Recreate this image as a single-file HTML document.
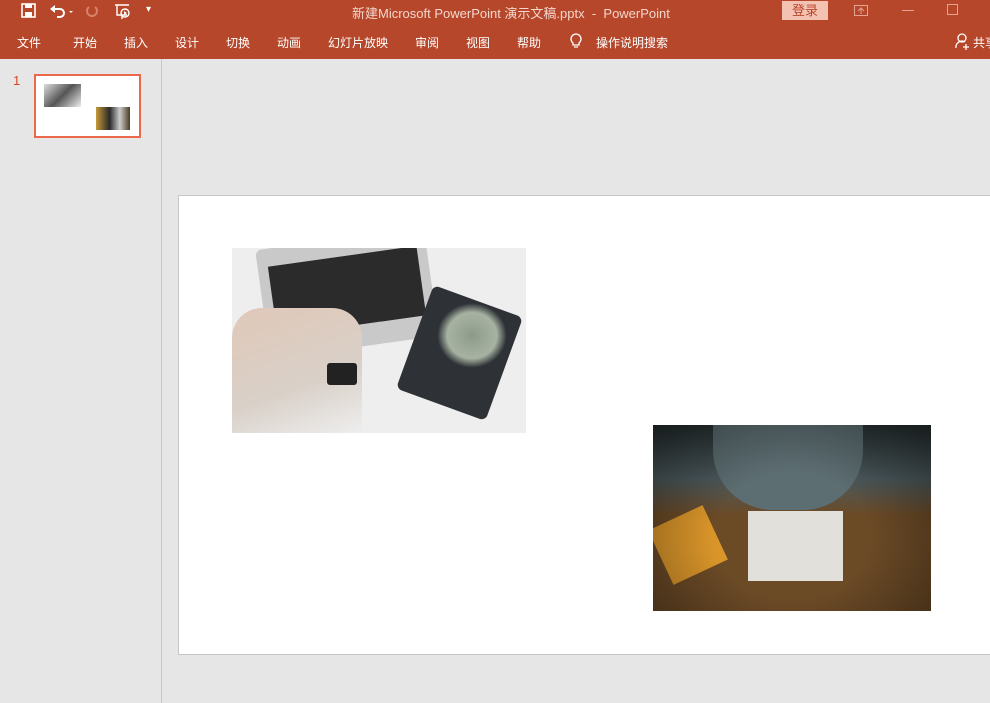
<!DOCTYPE html>
<html><head><meta charset="utf-8"><style>
*{margin:0;padding:0;box-sizing:border-box}
body{width:990px;height:703px;overflow:hidden;background:#e6e6e6;font-family:"Liberation Sans","Noto Sans CJK SC",sans-serif;position:relative}
.top{position:absolute;left:0;top:0;width:990px;height:59px;background:#b7472a;color:#fff}
.t{position:absolute;font-size:12px;white-space:nowrap}
.title{position:absolute;left:352px;top:3px;font-size:13px;color:#f3d6cd}
.login{position:absolute;left:782px;top:1px;width:46px;height:19px;background:#f4c2b3;color:#b7472a;font-size:13px;text-align:center;line-height:19px}
.side{position:absolute;left:0;top:59px;width:162px;height:644px;border-right:1px solid #c8c8c8;background:#e6e6e6}
.slide{position:absolute;left:178px;top:195px;width:820px;height:460px;background:#fff;border:1px solid #c6c6c6}
</style></head><body>
<div class="top">
<svg style="position:absolute;left:20px;top:3px" width="18" height="16" viewBox="0 0 18 16"><rect x="2" y="1" width="13" height="13" fill="none" stroke="#fff" stroke-width="1.6"/><rect x="5" y="1" width="7" height="4" fill="#fff"/><rect x="5" y="9" width="7" height="5" fill="#fff"/></svg>
<svg style="position:absolute;left:49px;top:3px" width="28" height="16" viewBox="0 0 28 16"><path d="M4 6 H11 A4 4 0 0 1 11 14 H8" fill="none" stroke="#fff" stroke-width="2"/><path d="M1 6 L6 2 V10 Z" fill="#fff"/><path d="M20 8 L24 8 L22 10 Z" fill="#fff"/></svg>
<svg style="position:absolute;left:84px;top:3px" width="16" height="16" viewBox="0 0 16 16"><path d="M11 4 A5 5 0 1 1 5 4" fill="none" stroke="#d8816a" stroke-width="2"/></svg>
<svg style="position:absolute;left:113px;top:3px" width="20" height="18" viewBox="0 0 20 18"><path d="M2 2 H16 M4 2 V12 H14 M9 12 V16" fill="none" stroke="#fff" stroke-width="1.4"/><circle cx="12" cy="10" r="4" fill="none" stroke="#fff" stroke-width="1.4"/><path d="M11 8 L14 10 L11 12Z" fill="#fff"/></svg>
<div class="t" style="left:146px;top:4px;font-size:10px">▾</div>
<div class="title">新建Microsoft PowerPoint 演示文稿.pptx &nbsp;- &nbsp;PowerPoint</div>
<div class="login">登录</div>
<svg style="position:absolute;left:854px;top:5px" width="14" height="11"><rect x="0.5" y="0.5" width="13" height="10" fill="none" stroke="#e3a593"/><path d="M4 6 L7 3 L10 6 M7 3 V9" stroke="#e3a593" fill="none"/></svg>
<div style="position:absolute;left:902px;top:10px;width:12px;height:1px;background:#e3a593"></div>
<div style="position:absolute;left:947px;top:4px;width:11px;height:11px;border:1px solid #e3a593"></div>
<div class="t" style="left:17px;top:34px">文件</div>
<div class="t" style="left:73px;top:34px">开始</div>
<div class="t" style="left:124px;top:34px">插入</div>
<div class="t" style="left:175px;top:34px">设计</div>
<div class="t" style="left:226px;top:34px">切换</div>
<div class="t" style="left:277px;top:34px">动画</div>
<div class="t" style="left:328px;top:34px">幻灯片放映</div>
<div class="t" style="left:415px;top:34px">审阅</div>
<div class="t" style="left:466px;top:34px">视图</div>
<div class="t" style="left:517px;top:34px">帮助</div>
<svg style="position:absolute;left:569px;top:32px" width="14" height="18" viewBox="0 0 14 18"><path d="M4 11 A5 5 0 1 1 10 11 V13 H4Z M5 15 H9" fill="none" stroke="#fff" stroke-width="1.3"/></svg>
<div class="t" style="left:596px;top:34px">操作说明搜索</div>
<svg style="position:absolute;left:955px;top:32px" width="16" height="18" viewBox="0 0 16 18"><circle cx="7" cy="6" r="4" fill="none" stroke="#fff" stroke-width="1.3"/><path d="M1 16 A6 6 0 0 1 10 10 M11 12 V18 M8 15 H14" fill="none" stroke="#fff" stroke-width="1.3"/></svg>
<div class="t" style="left:973px;top:34px">共享</div>
</div>
<div class="side">
<div style="position:absolute;left:13px;top:14px;color:#d24726;font-size:13px">1</div>
<div style="position:absolute;left:34px;top:15px;width:107px;height:64px;border:2px solid #e9694a;background:#fff">
<div style="position:absolute;left:8px;top:8px;width:37px;height:23px;background:linear-gradient(135deg,#ddd,#555 50%,#eee)"></div>
<div style="position:absolute;left:60px;top:31px;width:34px;height:23px;background:linear-gradient(90deg,#c79a3a,#2a2a2a 40%,#ccc 70%,#4a3a22)"></div>
</div>
</div>
<div class="slide">
<div style="position:absolute;left:53px;top:52px;width:294px;height:185px;background:#eeeeee;overflow:hidden">
<div style="position:absolute;left:30px;top:-10px;width:170px;height:110px;background:#c9c9c9;transform:rotate(-8deg);border-radius:6px"></div>
<div style="position:absolute;left:40px;top:8px;width:150px;height:70px;background:#2b2b2b;transform:rotate(-8deg)"></div>
<div style="position:absolute;left:0;top:60px;width:130px;height:125px;background:linear-gradient(160deg,#e0c8b8,#d9d0c8 60%,#eee);border-radius:30px 30px 0 0"></div>
<div style="position:absolute;left:95px;top:115px;width:30px;height:22px;background:#222;border-radius:3px"></div>
<div style="position:absolute;left:180px;top:50px;width:95px;height:110px;background:#2e3236;transform:rotate(20deg);border-radius:6px"></div>
<div style="position:absolute;left:205px;top:55px;width:70px;height:65px;background:radial-gradient(#8d9a8a,#a7b2a2 50%,transparent 70%)"></div>
</div>
<div style="position:absolute;left:474px;top:229px;width:278px;height:186px;background:#6b4a26;overflow:hidden">
<div style="position:absolute;left:0;top:0;width:278px;height:90px;background:linear-gradient(180deg,#2a3334,#4c5a5e 60%,#6b4a26)"></div>
<div style="position:absolute;left:60px;top:0;width:150px;height:85px;background:#5d6e72;border-radius:0 0 60px 60px"></div>
<div style="position:absolute;left:95px;top:86px;width:95px;height:70px;background:#e2e0da"></div>
<div style="position:absolute;left:5px;top:90px;width:60px;height:60px;background:#d9952a;transform:rotate(-25deg)"></div>
<div style="position:absolute;left:0;top:0;width:278px;height:186px;background:radial-gradient(ellipse at 50% 60%,transparent 40%,rgba(0,0,0,.45))"></div>
</div>
</div>
</body></html>
